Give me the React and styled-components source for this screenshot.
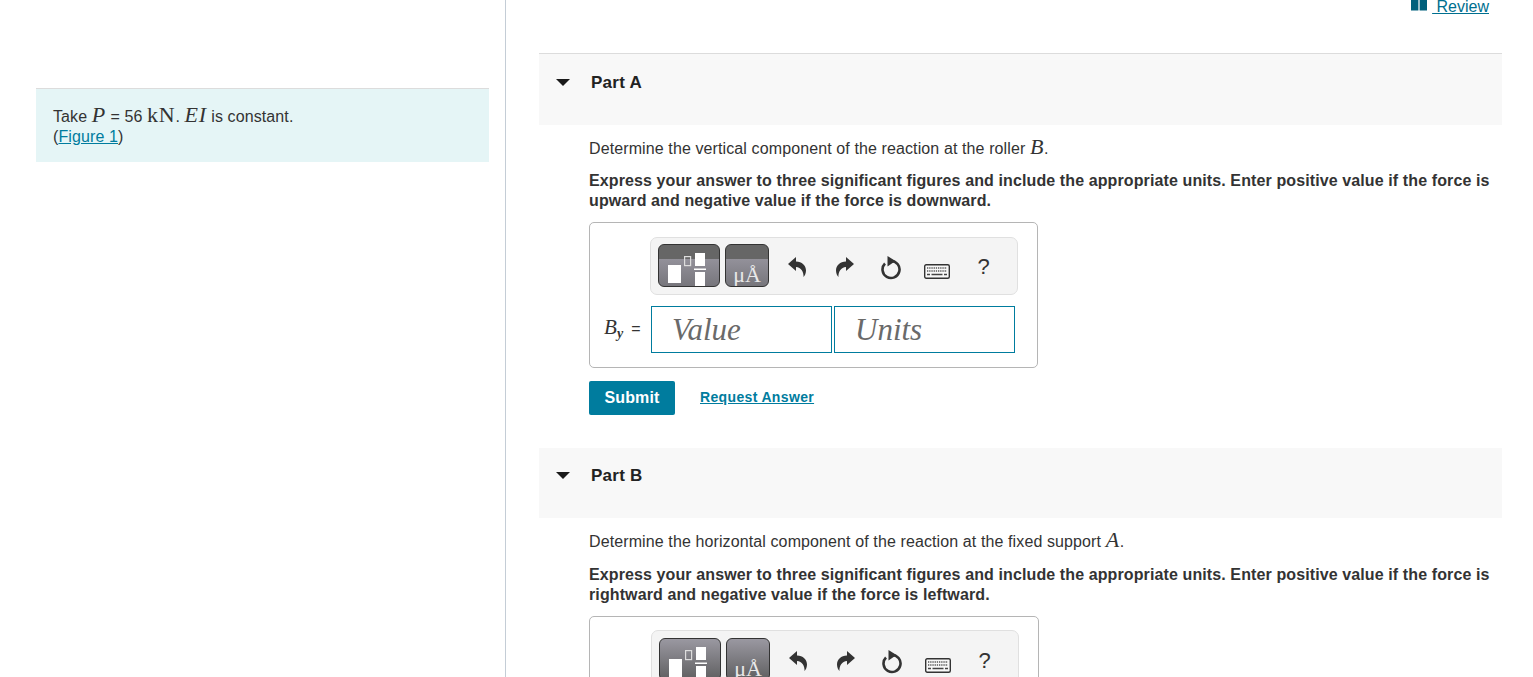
import React from "react";
import styled, { createGlobalStyle } from "styled-components";

const GlobalStyle = createGlobalStyle`
  html, body {
    margin: 0;
    height: 100%;
    overflow: hidden;
    background: #fff;
  }
  body {
    font-family: "Liberation Sans", Arial, sans-serif;
    font-size: 16px;
    line-height: 20px;
    letter-spacing: 0.11px;
    color: #333;
  }
`;

const Page = styled.div`
  display: flex;
  height: 100vh;
  overflow: hidden;
`;

const LeftColumn = styled.aside`
  flex: none;
  box-sizing: border-box;
  width: 506px;
  padding: 88px 16px 0 36px;
  border-right: 1px solid #c4cdd6;
`;

const Callout = styled.div`
  padding: 18px 17px 15px;
  background: #e5f5f6;
  border-top: 1px solid #dcdcdc;
`;

const TextLink = styled.a`
  color: #007c9e;
  text-decoration: underline;
`;

const Math = styled.span`
  font-family: "Liberation Serif", "Times New Roman", serif;
  font-size: 22px;
  line-height: 0;
  letter-spacing: 0.7px;
  font-style: ${(p) => (p.$upright ? "normal" : "italic")};
`;

const RightColumn = styled.main`
  flex: 1;
  min-width: 0;
  padding: 0 31px 0 33px;
`;

const TopBar = styled.div`
  display: flex;
  justify-content: flex-end;
  height: 53px;
  padding-right: 13px;
`;

const ReviewLink = styled.a`
  display: flex;
  align-items: flex-start;
  height: 14px;
  margin-top: -3px;
  color: #006f8f;
  letter-spacing: 0;
  text-decoration: underline;
  white-space: pre;
  svg {
    margin: 3px 5px 0 0;
  }
`;

const PartHeader = styled.div`
  display: flex;
  align-items: center;
  box-sizing: border-box;
  height: ${(p) => p.$height}px;
  padding: 0 0 ${(p) => p.$lift}px 17px;
  background: #f8f8f8;
  border-top: ${(p) => (p.$ruled ? "1px solid #dcdcdc" : "none")};
`;

const Caret = styled.span`
  width: 0;
  height: 0;
  margin: 0 21px 2px 0;
  border-left: 7px solid transparent;
  border-right: 7px solid transparent;
  border-top: 7px solid #1a1a1a;
`;

const PartTitle = styled.h2`
  margin: 0;
  font-size: 17px;
  line-height: 20px;
  font-weight: 700;
  letter-spacing: 0.25px;
  color: #222;
`;

const PartBody = styled.div`
  padding: 14px 0 33px 50px;
`;

const Prompt = styled.p`
  margin: 0;
  height: ${(p) => p.$height}px;
`;

const Instructions = styled.p`
  margin: 13px 0 11px;
  font-weight: 700;
`;

const AnswerBox = styled.div`
  box-sizing: border-box;
  width: ${(p) => p.$width}px;
  padding: ${(p) => p.$top}px 0 14px 14px;
  background: #fff;
  border: 1px solid #b5b5b5;
  border-radius: 5px;
`;

const Toolbar = styled.div`
  display: flex;
  box-sizing: border-box;
  width: 368px;
  height: 58px;
  margin-left: ${(p) => p.$indent}px;
  padding: ${(p) => p.$inset}px 7px 0;
  background: #f4f4f4;
  border: 1px solid #e0e0e0;
  border-radius: 7px;
`;

const PaletteButton = styled.div`
  flex: none;
  box-sizing: border-box;
  display: flex;
  align-items: flex-end;
  justify-content: center;
  width: ${(p) => p.$width}px;
  height: 43px;
  margin-right: 5px;
  overflow: hidden;
  border: 1px solid #333;
  border-radius: 6px;
  background: ${(p) =>
    p.$banded
      ? "linear-gradient(#666 0, #666 14px, #93919a 14px, #77767c 100%)"
      : "linear-gradient(#9a98a1, #5f5f60)"};
`;

const UnitsGlyph = styled.span`
  font-family: "Liberation Serif", "Times New Roman", serif;
  font-size: 22px;
  line-height: 23px;
  letter-spacing: 0;
  color: #e9e9e9;
  white-space: nowrap;
`;

const ToolIcon = styled.div`
  flex: none;
  display: flex;
  align-items: center;
  justify-content: center;
  box-sizing: border-box;
  width: 47px;
  height: 43px;
  margin-left: ${(p) => p.$offset || 0}px;
  padding-top: ${(p) => p.$drop || 0}px;
`;

const HelpMark = styled.span`
  font-size: 22px;
  letter-spacing: 0;
  color: #333;
`;

const InputRow = styled.div`
  display: flex;
  align-items: center;
  margin-top: 11px;
`;

const FieldLabel = styled.div`
  flex: none;
  width: 47px;
  padding-bottom: 3px;
  white-space: nowrap;
`;

const LabelVar = styled.span`
  font-family: "Liberation Serif", "Times New Roman", serif;
  font-size: 21px;
  font-style: italic;
`;

const LabelSub = styled.sub`
  margin-right: 8px;
  font-family: "Liberation Serif", "Times New Roman", serif;
  font-size: 14px;
  font-style: italic;
  font-weight: 700;
  line-height: 0;
`;

const Field = styled.div`
  box-sizing: border-box;
  width: 181px;
  height: 47px;
  margin-right: 2px;
  padding-left: 20px;
  border: 1px solid #007c9e;
  font-family: "Liberation Serif", "Times New Roman", serif;
  font-size: 31px;
  font-style: italic;
  line-height: 45px;
  letter-spacing: 0;
  color: #6a6a6a;
`;

const Actions = styled.div`
  display: flex;
  align-items: center;
  margin-top: 13px;
`;

const SubmitButton = styled.button`
  width: 86px;
  height: 34px;
  padding: 0;
  border: none;
  border-radius: 2px;
  background: #007c9e;
  color: #fff;
  font: 700 16px "Liberation Sans", Arial, sans-serif;
  letter-spacing: 0.13px;
`;

const RequestLink = styled.a`
  margin: 0 0 2px 25px;
  color: #007c9e;
  font-size: 14px;
  font-weight: 700;
  letter-spacing: 0.35px;
  text-decoration: underline;
`;

function BookIcon() {
  return (
    <svg width="16" height="11" viewBox="0 0 16 11">
      <path d="M0 0h7.4v10.5H0zM8.6 0H16v10.5H8.6z" fill="#00607c" />
    </svg>
  );
}

function TemplateIcon() {
  return (
    <svg width="60" height="41" viewBox="0 0 60 41">
      <rect x="9" y="20" width="13" height="18" fill="#fff" />
      <rect x="25.6" y="11.6" width="6" height="9" fill="none" stroke="#ddd" strokeWidth="1.2" />
      <rect x="36" y="8" width="10" height="13" fill="#fff" />
      <rect x="35" y="23.5" width="12" height="1.5" fill="#fff" />
      <rect x="36" y="27" width="10" height="14" fill="#fff" />
    </svg>
  );
}

function UndoIcon({ flipped }) {
  return (
    <svg width="18" height="20" viewBox="0 0 18 20" style={flipped ? { transform: "scaleX(-1)" } : undefined}>
      <path
        d="M0 7 8 0V4.5C14 4.5 18 8.5 18 13.5 18 16 17 18.5 15.5 20 16 15 13 10.5 8 10V14Z"
        fill="#333"
      />
    </svg>
  );
}

function ResetIcon() {
  return (
    <svg width="22" height="24" viewBox="0 0 22 24">
      <path d="M5 7.5A8.5 8.5 0 1 0 11 5" fill="none" stroke="#333" strokeWidth="2.6" />
      <path d="M7.5 0 15.5 5 7.5 10.5Z" fill="#333" />
    </svg>
  );
}

function KeyboardIcon() {
  return (
    <svg width="26" height="15" viewBox="0 0 26 15">
      <rect x="0.7" y="0.7" width="24.6" height="13.6" rx="1.5" fill="#f8f8f8" stroke="#333" strokeWidth="1.4" />
      <path d="M3 4h20M3 7h20" stroke="#555" strokeWidth="1.4" strokeDasharray="1.3 0.9" />
      <path d="M3 10.5h3M7.5 10.5h11M20 10.5h3" stroke="#444" strokeWidth="1.5" />
    </svg>
  );
}

function AnswerEntry({ width, indent, banded, label, top, inset }) {
  return (
    <AnswerBox $width={width} $top={top}>
      <Toolbar $indent={indent} $inset={inset}>
        <PaletteButton $width={62} $banded={banded}>
          <TemplateIcon />
        </PaletteButton>
        <PaletteButton $width={44} $banded={banded}>
          <UnitsGlyph>μÅ</UnitsGlyph>
        </PaletteButton>
        <ToolIcon $offset={-1} $drop={2}>
          <UndoIcon />
        </ToolIcon>
        <ToolIcon $offset={1} $drop={2}>
          <UndoIcon flipped />
        </ToolIcon>
        <ToolIcon $offset={-1} $drop={4}>
          <ResetIcon />
        </ToolIcon>
        <ToolIcon $offset={-1} $drop={11}>
          <KeyboardIcon />
        </ToolIcon>
        <ToolIcon $drop={2}>
          <HelpMark>?</HelpMark>
        </ToolIcon>
      </Toolbar>
      <InputRow>
        <FieldLabel>
          <LabelVar>{label[0]}</LabelVar>
          <LabelSub>{label[1]}</LabelSub>=
        </FieldLabel>
        <Field>Value</Field>
        <Field>Units</Field>
      </InputRow>
    </AnswerBox>
  );
}

export default function App() {
  return (
    <Page>
      <GlobalStyle />
      <LeftColumn>
        <Callout>
          Take <Math>P</Math> = 56 <Math $upright>kN</Math>. <Math>EI</Math> is constant.
          <br />
          (<TextLink href="#figure">Figure 1</TextLink>)
        </Callout>
      </LeftColumn>
      <RightColumn>
        <TopBar>
          <ReviewLink href="#review">
            <BookIcon />
            {"\u00a0Review"}
          </ReviewLink>
        </TopBar>

        <PartHeader $height={72} $lift={13} $ruled>
          <Caret />
          <PartTitle>Part A</PartTitle>
        </PartHeader>
        <PartBody>
          <Prompt $height={19}>
            Determine the vertical component of the reaction at the roller <Math>B</Math>.
          </Prompt>
          <Instructions>
            Express your answer to three significant figures and include the appropriate units. Enter positive value if the force is upward and negative value if the force is downward.
          </Instructions>
          <AnswerEntry width={449} indent={46} banded label={["B", "y"]} top={14} inset={6} />
          <Actions>
            <SubmitButton>Submit</SubmitButton>
            <RequestLink href="#answer">Request Answer</RequestLink>
          </Actions>
        </PartBody>

        <PartHeader $height={70} $lift={14}>
          <Caret />
          <PartTitle>Part B</PartTitle>
        </PartHeader>
        <PartBody>
          <Prompt $height={20}>
            Determine the horizontal component of the reaction at the fixed support <Math>A</Math>.
          </Prompt>
          <Instructions>
            Express your answer to three significant figures and include the appropriate units. Enter positive value if the force is rightward and negative value if the force is leftward.
          </Instructions>
          <AnswerEntry width={450} indent={47} label={["A", "x"]} top={13} inset={7} />
        </PartBody>
      </RightColumn>
    </Page>
  );
}
